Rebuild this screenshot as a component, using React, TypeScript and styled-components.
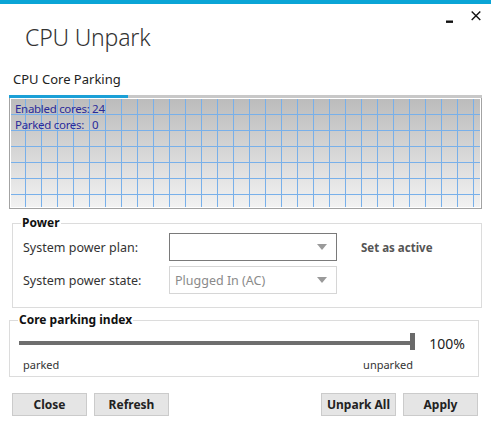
import React from 'react';
import styled, { createGlobalStyle } from 'styled-components';

const GlobalStyle = createGlobalStyle`
    html, body {
        margin: 0;
        padding: 0;
        background: #ffffff;
    }
    body {
        font-family: "Noto Sans", "Open Sans", sans-serif;
        color: #333333;
    }
`;

const Window = styled.div`
    width: 491px;
    height: 438px;
    background: #ffffff;
    border-top: 4px solid #0aa5d6;
    box-sizing: border-box;
    display: flex;
    flex-direction: column;
`;

const TitleBar = styled.div`
    display: flex;
    justify-content: space-between;
    align-items: flex-start;
    height: 62px;
`;

const Title = styled.h1`
    margin: 17px 0 0 25px;
    font-size: 23px;
    font-weight: 300;
    color: #333333;
    letter-spacing: -0.2px;
`;

const WindowControls = styled.div`
    display: flex;
    align-items: center;
    gap: 16px;
    margin: 4px 10px 0 0;
`;

const ControlButton = styled.span`
    display: flex;
    align-items: center;
    justify-content: center;
    width: 10px;
    height: 16px;
`;

const TabStrip = styled.div`
    margin: 0 9px 0 9px;
    border-bottom: 3px solid #c8c8c8;
    display: flex;
`;

const Tab = styled.div<{ $active?: boolean }>`
    padding: 4px 7px 7px 4px;
    font-size: 13px;
    color: #222222;
    margin-bottom: -3px;
    border-bottom: 3px solid ${p => (p.$active ? '#1ba0d7' : 'transparent')};
`;

const Chart = styled.div`
    margin: 0 9px;
    height: 111px;
    border: 1px solid #a3a3a3;
    border-top: none;
    box-shadow: inset 0 1px 0 #ffffff, inset 1px 0 0 #ffffff, inset -1px 0 0 #ffffff, inset 0 -1px 0 #ffffff;
    background-color: #d0d0d0;
    background-image:
        linear-gradient(to right, transparent 15px, #78b0ea 15px, #78b0ea 16px),
        linear-gradient(to bottom, transparent 15px, #78b0ea 15px, #78b0ea 16px),
        linear-gradient(to bottom, #bbbbbb 0%, #f2f2f2 100%);
    background-size: 16px 16px, 16px 16px, 100% 100%;
    background-position: 0 1px, 0 1px, 0 0;
    padding: 3px 5px;
    box-sizing: border-box;
`;

const ChartLine = styled.div`
    font-size: 11.5px;
    line-height: 16px;
    color: #2a2a9a;
    letter-spacing: -0.3px;
    white-space: pre;
`;

const GroupBox = styled.fieldset<{ $left: number; $right: number }>`
    margin: 0 ${p => p.$right}px 0 ${p => p.$left}px;
    border: 1px solid #dcdcdc;
    padding: 0;
    min-width: 0;
`;

const GroupLegend = styled.legend`
    font-size: 12px;
    font-weight: 700;
    color: #111111;
    padding: 0 1px;
    margin-left: 8px;
    line-height: 14px;
`;

const PowerGrid = styled.div`
    display: grid;
    grid-template-columns: 146px 168px auto;
    grid-template-rows: 28px 28px;
    row-gap: 5px;
    align-items: center;
    padding: 3px 0 13px 10px;
`;

const FieldLabel = styled.span`
    font-size: 12.5px;
    color: #333333;
`;

const Select = styled.div<{ $focused?: boolean; $disabled?: boolean }>`
    height: 28px;
    box-sizing: border-box;
    border: 1px solid ${p => (p.$focused ? '#7a7a7a' : '#d6d6d6')};
    background: #ffffff;
    display: flex;
    align-items: center;
    justify-content: space-between;
    padding: 0 9px 0 5px;
    font-size: 12.5px;
    color: ${p => (p.$disabled ? '#8a8a8a' : '#333333')};
`;

const Arrow = styled.span`
    width: 0;
    height: 0;
    border-left: 5px solid transparent;
    border-right: 5px solid transparent;
    border-top: 6px solid #9a9a9a;
`;

const LinkText = styled.span`
    font-size: 11.5px;
    font-weight: 700;
    color: #555555;
    margin-left: 24px;
`;

const SliderRow = styled.div`
    display: flex;
    align-items: center;
    padding: 5px 13px 0 9px;
    height: 22px;
`;

const Track = styled.div`
    position: relative;
    width: 394px;
    height: 4px;
    background: #6e6e6e;
`;

const Thumb = styled.span`
    position: absolute;
    right: -2px;
    top: -8px;
    width: 5px;
    height: 17px;
    background: #6a6a6a;
`;

const Percent = styled.span`
    margin-left: auto;
    font-size: 14px;
    color: #222222;
`;

const TickLabels = styled.div`
    display: flex;
    justify-content: space-between;
    width: 390px;
    padding: 3px 0 4px 13px;
    font-size: 11px;
    color: #333333;
`;

const ButtonRow = styled.div`
    display: flex;
    padding: 16px 13px 0 12px;
    gap: 7px;
`;

const Button = styled.button<{ $pushRight?: boolean }>`
    width: 75px;
    height: 23px;
    background: #e5e5e5;
    border: 1px solid #cbcbcb;
    font-family: inherit;
    font-size: 12px;
    font-weight: 700;
    color: #222222;
    padding: 0;
    margin-left: ${p => (p.$pushRight ? 'auto' : '0')};
`;

const Spacer = styled.div<{ $h: number }>`
    height: ${p => p.$h}px;
    flex: none;
`;

const MinimizeIcon = () => (
    <svg width="8" height="16" viewBox="0 0 8 16">
        <rect x="0" y="12.5" width="7" height="2.4" fill="#111" />
    </svg>
);

const CloseIcon = () => (
    <svg width="10" height="16" viewBox="0 0 10 16">
        <path d="M0.7 3.5 L9.3 11.9 M9.3 3.5 L0.7 11.9" stroke="#111" strokeWidth="1.4" />
    </svg>
);

const App = () => {
    return (
        <>
            <GlobalStyle />
            <Window>
                <TitleBar>
                    <Title>CPU Unpark</Title>
                    <WindowControls>
                        <ControlButton><MinimizeIcon /></ControlButton>
                        <ControlButton><CloseIcon /></ControlButton>
                    </WindowControls>
                </TitleBar>

                <TabStrip>
                    <Tab $active>CPU Core Parking</Tab>
                </TabStrip>
                <Chart>
                    <ChartLine>Enabled cores: 24</ChartLine>
                    <ChartLine>Parked cores:   0</ChartLine>
                </Chart>

                <Spacer $h={7} />
                <GroupBox $left={12} $right={9}>
                    <GroupLegend>Power</GroupLegend>
                    <PowerGrid>
                        <FieldLabel>System power plan:</FieldLabel>
                        <Select $focused><span /><Arrow /></Select>
                        <LinkText>Set as active</LinkText>
                        <FieldLabel>System power state:</FieldLabel>
                        <Select $disabled>Plugged In (AC)<Arrow /></Select>
                        <span />
                    </PowerGrid>
                </GroupBox>

                <Spacer $h={5} />
                <GroupBox $left={9} $right={12}>
                    <GroupLegend>Core parking index</GroupLegend>
                    <SliderRow>
                        <Track><Thumb /></Track>
                        <Percent>100%</Percent>
                    </SliderRow>
                    <TickLabels>
                        <span>parked</span>
                        <span>unparked</span>
                    </TickLabels>
                </GroupBox>

                <ButtonRow>
                    <Button>Close</Button>
                    <Button>Refresh</Button>
                    <Button $pushRight>Unpark All</Button>
                    <Button>Apply</Button>
                </ButtonRow>
            </Window>
        </>
    );
};

export default App;
